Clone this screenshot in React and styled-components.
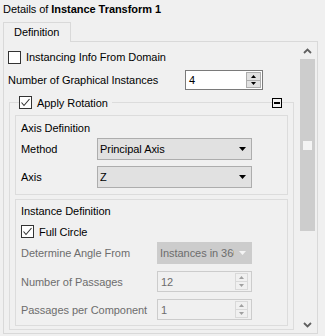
import styled, { createGlobalStyle } from 'styled-components'

const Global = createGlobalStyle`
  html, body {
    margin: 0;
    background: #f0f0f0;
    font-family: "Liberation Sans", Arial, sans-serif;
    font-size: 11px;
    letter-spacing: -0.05px;
    color: #000;
  }
`

const Page = styled.div`
  width: 325px;
  height: 336px;
  overflow: hidden;
`

const Title = styled.div`
  height: 22px;
  box-sizing: border-box;
  padding: 3px 0 0 3px;
  line-height: 13px;
  b { font-weight: bold; }
`

const TabStrip = styled.div`
  display: flex;
  padding-left: 3px;
`

const Tab = styled.div`
  position: relative;
  width: 68px;
  height: 20px;
  box-sizing: border-box;
  margin-bottom: -1px;
  border: 1px solid #d9d9d9;
  border-bottom: none;
  background: #f0f0f0;
  padding-left: 10px;
  line-height: 19px;
`

const Panel = styled.div`
  display: flex;
  margin-left: 3px;
  width: 315px;
  height: 293px;
  box-sizing: border-box;
  border: 1px solid #d9d9d9;
`

const Content = styled.div`
  flex: 1;
  min-width: 0;
  overflow: hidden;
  padding: 5px 0 0 4px;
`

const Row = styled.div`
  display: flex;
  align-items: center;
  height: ${p => p.$h || 20}px;
  margin-top: ${p => p.$mt || 0}px;
  color: ${p => (p.$disabled ? '#6d6d6d' : '#000')};
`

const Label = styled.div`
  width: ${p => p.$w}px;
  flex: none;
  white-space: nowrap;
`

const CheckRow = styled.label`
  display: flex;
  align-items: center;
  gap: 5px;
`

const Box = styled.span`
  width: 13px;
  height: 13px;
  box-sizing: border-box;
  border: 1px solid #333;
  background: #fff;
  flex: none;
  display: flex;
  align-items: center;
  justify-content: center;
`

function Check({ checked }) {
  return (
    <Box>
      {checked && (
        <svg width="11" height="11" viewBox="0 0 11 11">
          <polyline points="1.5,5.5 4,8.5 9.5,2" fill="none" stroke="#333" strokeWidth="1.1" />
        </svg>
      )}
    </Box>
  )
}

const Group = styled.div`
  margin: 12px 0 0 1px;
  width: 285px;
  box-sizing: border-box;
  border: 1px solid #dcdcdc;
  padding-bottom: 3px;
`

const LegendBar = styled.div`
  display: flex;
  align-items: center;
  justify-content: space-between;
  height: 13px;
  margin: -7px 11px 0 9px;
`

const Legend = styled(CheckRow)`
  background: #f0f0f0;
  padding-right: 4px;
  height: 13px;
`

const Collapse = styled.span`
  width: 10px;
  height: 10px;
  box-sizing: border-box;
  border: 1px solid #000;
  background: #f0f0f0;
  display: flex;
  align-items: center;
  justify-content: center;
  &::after {
    content: '';
    width: 6px;
    height: 2px;
    background: #000;
  }
`

const SubBox = styled.div`
  margin: ${p => p.$mt}px 5px 0 5px;
  border: 1px solid #dcdcdc;
  padding: ${p => p.$pt}px 0 ${p => p.$pb}px 5px;
`

const BoxTitle = styled.div`
  height: 16px;
  line-height: 16px;
`

const Select = styled.div`
  width: ${p => p.$w}px;
  height: 22px;
  box-sizing: border-box;
  display: flex;
  align-items: center;
  padding: 0 5px 0 2px;
  border: 1px solid ${p => (p.$disabled ? '#cccccc' : '#adadad')};
  background: ${p => (p.$disabled ? '#cccccc' : '#e1e1e1')};
  color: ${p => (p.$disabled ? '#6d6d6d' : '#000')};
  span {
    flex: 1;
    overflow: hidden;
    white-space: nowrap;
    margin-right: 5px;
  }
`

const Caret = ({ color }) => (
  <svg width="7" height="4" viewBox="0 0 7 4" style={{ flex: 'none' }}>
    <polygon points="0,0 7,0 3.5,4" fill={color} />
  </svg>
)

const Spin = styled.div`
  width: ${p => p.$w}px;
  height: ${p => p.$h}px;
  box-sizing: border-box;
  display: flex;
  align-items: center;
  border: 1px solid ${p => (p.$disabled ? '#cccccc' : '#7a7a7a')};
  background: ${p => (p.$disabled ? '#f0f0f0' : '#fff')};
  color: ${p => (p.$disabled ? '#6d6d6d' : '#000')};
  padding: 0 1px 0 3px;
  span { flex: 1; }
`

const SpinButtons = styled.div`
  width: ${p => (p.$disabled ? 13 : 15)}px;
  height: calc(100% - 2px);
  display: flex;
  flex-direction: column;
  margin-right: ${p => (p.$disabled ? 2 : 0)}px;
`

const SpinBtn = styled.div`
  flex: 1;
  display: flex;
  align-items: center;
  justify-content: center;
  box-sizing: border-box;
  border: 1px solid ${p => (p.$disabled ? '#d9d9d9' : '#adadad')};
  background: ${p => (p.$disabled ? '#f0f0f0' : '#e1e1e1')};
  & + & { border-top: none; }
`

function Arrow({ up, color }) {
  return (
    <svg width="5" height="3" viewBox="0 0 5 3">
      <polygon points={up ? '0,3 5,3 2.5,0' : '0,0 5,0 2.5,3'} fill={color} />
    </svg>
  )
}

function SpinBox({ value, w, h, disabled }) {
  const c = disabled ? '#a0a0a0' : '#000'
  return (
    <Spin $w={w} $h={h} $disabled={disabled}>
      <span>{value}</span>
      <SpinButtons $disabled={disabled}>
        <SpinBtn $disabled={disabled}><Arrow up color={c} /></SpinBtn>
        <SpinBtn $disabled={disabled}><Arrow color={c} /></SpinBtn>
      </SpinButtons>
    </Spin>
  )
}

const Scrollbar = styled.div`
  width: 15px;
  margin-right: 2px;
  display: flex;
  flex-direction: column;
`

const ScrollArrow = styled.div`
  height: 17px;
  flex: none;
  display: flex;
  align-items: center;
  justify-content: center;
`

const Thumb = styled.div`
  height: 172px;
  background: #cdcdcd;
  display: flex;
  align-items: center;
  justify-content: center;
  &::after {
    content: '';
    width: 9px;
    height: 9px;
    background: #f4f4f4;
  }
`

const Track = styled.div`
  flex: 1;
`

const Chevron = ({ up }) => (
  <svg width="9" height="6" viewBox="0 0 9 6">
    <polyline
      points={up ? '1,5 4.5,1.5 8,5' : '1,1 4.5,4.5 8,1'}
      fill="none"
      stroke="#606060"
      strokeWidth="1.8"
    />
  </svg>
)

export default function App() {
  return (
    <Page>
      <Global />
      <Title>
        Details of <b>Instance Transform 1</b>
      </Title>
      <TabStrip>
        <Tab>Definition</Tab>
      </TabStrip>
      <Panel>
        <Content>
          <Row>
            <CheckRow>
              <Check />
              Instancing Info From Domain
            </CheckRow>
          </Row>
          <Row $mt={3}>
            <Label $w={177}>Number of Graphical Instances</Label>
            <SpinBox value="4" w={78} h={20} />
          </Row>
          <Group>
            <LegendBar>
              <Legend>
                <Check checked />
                Apply Rotation
              </Legend>
              <Collapse />
            </LegendBar>
            <SubBox $mt={6} $pt={4} $pb={6}>
              <BoxTitle>Axis Definition</BoxTitle>
              <Row $h={22} $mt={2}>
                <Label $w={76}>Method</Label>
                <Select $w={155}>
                  <span>Principal Axis</span>
                  <Caret color="#000" />
                </Select>
              </Row>
              <Row $h={22} $mt={6}>
                <Label $w={76}>Axis</Label>
                <Select $w={155}>
                  <span>Z</span>
                  <Caret color="#000" />
                </Select>
              </Row>
            </SubBox>
            <SubBox $mt={4} $pt={3} $pb={5}>
              <BoxTitle>Instance Definition</BoxTitle>
              <Row $h={13} $mt={6}>
                <CheckRow>
                  <Check checked />
                  Full Circle
                </CheckRow>
              </Row>
              <Row $h={22} $mt={4} $disabled>
                <Label $w={136}>Determine Angle From</Label>
                <Select $w={95} $disabled>
                  <span>Instances in 360</span>
                  <Caret color="#f4f4f4" />
                </Select>
              </Row>
              <Row $h={21} $mt={7} $disabled>
                <Label $w={136}>Number of Passages</Label>
                <SpinBox value="12" w={95} h={21} disabled />
              </Row>
              <Row $h={21} $mt={7} $disabled>
                <Label $w={136}>Passages per Component</Label>
                <SpinBox value="1" w={95} h={21} disabled />
              </Row>
            </SubBox>
          </Group>
        </Content>
        <Scrollbar>
          <ScrollArrow><Chevron up /></ScrollArrow>
          <Thumb />
          <Track />
          <ScrollArrow><Chevron /></ScrollArrow>
        </Scrollbar>
      </Panel>
    </Page>
  )
}
